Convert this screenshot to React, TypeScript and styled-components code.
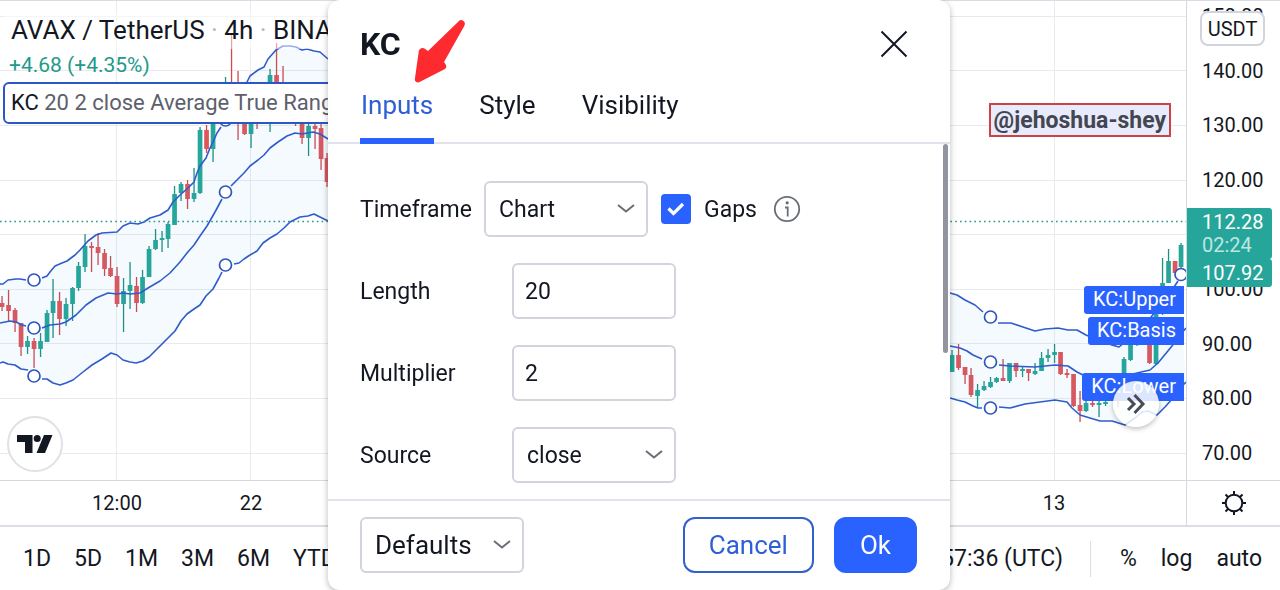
import React from 'react';
import styled, { createGlobalStyle } from 'styled-components';

const GlobalStyle = createGlobalStyle`
  *, *::before, *::after { box-sizing: border-box; }
  body {
    margin: 0;
    background: #fff;
    color: #131722;
    font-family: Roboto, "Liberation Sans", sans-serif;
    overflow: hidden;
  }
  button, input, select { font: inherit; color: inherit; margin: 0; }
`;

/* ---------- chart data ---------- */

type Point = [number, number];
/* x, high, bodyTop, bodyBottom, low, rising */
type Candle = [number, number, number, number, number, 0 | 1];

const leftCandles: Candle[] = [
  [2, 296, 303, 307, 311, 0], [8.5, 290, 305, 311, 321, 0], [15, 308, 310, 323, 332, 0],
  [21, 323, 323, 347, 356, 0], [27.5, 336, 341, 347, 354, 1], [34, 338, 341, 349, 368, 0],
  [40.5, 333, 341, 349, 357, 1], [47, 310, 313, 342, 342, 1], [53, 279, 301, 313, 338, 1],
  [59.5, 292, 301, 319, 335, 0], [66, 298, 304, 319, 326, 1], [72.5, 287, 288, 304, 321, 1],
  [78.5, 262, 266, 288, 291, 1], [85, 234, 246, 267, 272, 1], [91.5, 242, 246, 248, 272, 0],
  [98, 233, 247, 253, 265, 0], [104.5, 249, 253, 269, 276, 0], [110.5, 256, 268, 276, 277, 0],
  [117, 267, 276, 304, 307, 0], [123.5, 278, 291, 304, 332, 1], [130, 262, 285, 291, 309, 1],
  [136.5, 277, 286, 303, 312, 0], [142.5, 270, 277, 303, 304, 1], [149, 246, 249, 277, 277, 1],
  [155.5, 229, 240, 249, 250, 1], [162, 231, 238, 240, 252, 1], [168, 222, 224, 239, 248, 1],
  [174.5, 186, 194, 225, 225, 1], [181, 182, 184, 193, 201, 1], [187.5, 180, 184, 199, 209, 0],
  [194, 168, 193, 199, 202, 1], [200, 127, 130, 193, 194, 1], [206.5, 125, 130, 149, 153, 0],
  [213, 110, 115, 149, 162, 1], [225.5, 77, 90, 115, 120, 1], [231.5, 33, 90, 110, 118, 0],
  [238, 71, 90, 115, 140, 0], [244.5, 90, 100, 134, 135, 0], [251, 95, 100, 134, 148, 1],
  [257, 95, 100, 115, 129, 0], [270, 69, 75, 110, 132, 1], [276.5, 43, 75, 95, 110, 0],
  [283, 66, 90, 110, 118, 0], [295.5, 95, 100, 118, 126, 0], [302, 100, 110, 138, 144, 0],
  [308.5, 110, 126, 138, 156, 1], [315, 118, 126, 129, 149, 0], [321, 122, 128, 159, 170, 0],
  [327, 153, 158, 182, 187, 0],
];

const rightCandles: Candle[] = [
  [952, 350, 355, 372, 372, 1], [958.5, 344, 355, 368, 370, 0], [965, 367, 367, 375, 384, 0],
  [971, 368, 375, 395, 397, 0], [977.5, 384, 390, 396, 407, 1], [984, 381, 386, 390, 391, 1],
  [990.5, 377, 382, 387, 388, 1], [996.5, 377, 378, 382, 383, 1], [1003, 359, 378, 381, 381, 0],
  [1009.5, 363, 363, 381, 383, 1], [1016, 363, 363, 371, 377, 0], [1022.5, 366, 369, 371, 377, 1],
  [1028.5, 369, 369, 373, 381, 0], [1035, 363, 371, 374, 375, 1], [1041.5, 352, 358, 371, 371, 1],
  [1048, 349, 355, 358, 362, 1], [1054.5, 344, 352, 355, 363, 1], [1060.5, 352, 352, 374, 375, 0],
  [1067, 369, 373, 375, 378, 0], [1073.5, 374, 374, 406, 407, 0], [1080, 391, 405, 411, 422, 0],
  [1086, 395, 403, 411, 412, 1], [1092.5, 396, 403, 405, 407, 0], [1099, 396, 403, 405, 417, 1],
  [1105.5, 396, 402, 404, 406, 1], [1118, 385, 390, 398, 407, 0], [1124, 357, 359, 385, 390, 1],
  [1130.5, 335, 344, 360, 361, 1], [1137, 330, 335, 343, 346, 1], [1149.5, 325, 330, 363, 364, 0],
  [1156, 300, 310, 364, 365, 1], [1162.5, 258, 283, 310, 315, 1], [1168.5, 249, 261, 283, 283, 1],
  [1175, 261, 261, 273, 273, 0], [1181, 243, 245, 267, 268, 1],
];

/* Each line is a list of segments; the line is interrupted where a handle sits. */
const leftUpper: Point[][] = [
  [[0, 284], [3, 284], [8, 280], [16, 279], [20, 279], [26, 280]],
  [[42, 278], [47, 276], [50, 272], [55, 266], [62, 263], [67, 261], [75, 255], [80, 250], [88, 241], [96, 235], [102, 233], [117, 232], [123, 226], [130, 223], [138, 224], [144, 222], [150, 218], [160, 215], [168, 210], [173, 202], [180, 195], [188, 188], [194, 182], [197, 173], [200, 166], [206, 158], [210, 148], [213, 142], [217, 133], [221, 127]],
  [[230, 112], [240, 96], [247, 82], [250, 76], [258, 70], [264, 67], [268, 59], [276, 50], [283, 46], [290, 46], [296, 47], [302, 50], [307, 49], [314, 51], [320, 52], [328, 59]],
];
const leftBasis: Point[][] = [
  [[0, 323], [10, 321], [16, 322], [22, 325], [26, 326]],
  [[42, 328], [50, 325], [60, 324], [66, 322], [76, 315], [86, 305], [96, 298], [108, 293], [117, 294], [123, 293], [130, 294], [140, 293], [148, 288], [160, 281], [170, 273], [180, 262], [187, 253], [194, 245], [200, 236], [207, 226], [215, 212], [222, 199]],
  [[231, 186], [236, 181], [244, 173], [250, 166], [258, 160], [264, 155], [270, 148], [278, 142], [287, 136], [295, 133], [302, 134], [313, 132], [320, 134], [328, 139]],
];
const leftLower: Point[][] = [
  [[0, 363], [3, 362], [8, 364], [15, 365], [21, 369], [28, 370]],
  [[42, 379], [47, 379], [53, 383], [60, 385], [66, 383], [73, 380], [83, 372], [92, 365], [102, 359], [111, 353], [117, 355], [123, 360], [130, 362], [136, 363], [143, 361], [149, 357], [156, 350], [162, 344], [168, 338], [175, 331], [181, 321], [187, 314], [194, 309], [200, 305], [206, 296], [213, 289], [219, 278], [222, 272]],
  [[234, 264], [239, 263], [244, 259], [250, 255], [257, 251], [263, 243], [270, 238], [277, 234], [284, 228], [290, 222], [300, 217], [308, 216], [314, 214], [320, 217], [328, 221]],
];
const rightUpper: Point[][] = [
  [[945, 292], [950, 293], [957, 295], [965, 300], [975, 305], [983, 312]],
  [[998, 323], [1011, 323], [1020, 326], [1035, 331], [1045, 329], [1058, 328], [1068, 330], [1077, 330], [1086, 335], [1100, 341], [1112, 345], [1119, 347], [1130, 338], [1145, 325], [1158, 308], [1172, 290], [1178, 281]],
];
const rightBasis: Point[][] = [
  [[945, 345], [950, 346], [960, 348], [967, 351], [973, 355], [982, 359]],
  [[999, 365], [1010, 366], [1035, 367], [1045, 366], [1055, 365], [1068, 366], [1077, 372], [1083, 375], [1105, 378], [1122, 377], [1137, 373], [1150, 370], [1158, 363], [1172, 346], [1180, 335], [1186, 328]],
];
const rightLower: Point[][] = [
  [[945, 396], [950, 398], [957, 400], [965, 402], [973, 406], [978, 408], [982, 408]],
  [[999, 407], [1010, 408], [1025, 404], [1040, 402], [1055, 400], [1067, 402], [1072, 408], [1080, 415], [1090, 418], [1100, 421], [1112, 421], [1125, 425], [1135, 418], [1142, 412], [1148, 411], [1157, 415], [1165, 407], [1173, 398], [1180, 388], [1186, 382]],
];

const handles: Point[] = [
  [34, 280], [34, 328], [34, 376], [225.5, 120], [225.5, 192], [225.5, 265],
  [990.5, 317], [990.5, 362], [990.5, 408], [1181, 274.5],
];

const gridRows = [16, 70, 125, 180, 234, 289, 343, 398, 453];
const gridColumns = [117, 251, 1055];

const toPoints = (points: Point[]) => points.map((p) => p.join(',')).join(' ');

function Band({ upper, basis, lower }: { upper: Point[][]; basis: Point[][]; lower: Point[][] }) {
  return (
    <>
      <polygon points={toPoints([...upper.flat(), ...lower.flat().reverse()])} fill="#2196d8" fillOpacity="0.052" />
      {[...upper, ...basis, ...lower].map((segment, i) => (
        <polyline key={i} points={toPoints(segment)} fill="none" stroke="#2f5ccb" strokeWidth="1.6" strokeLinejoin="round" />
      ))}
    </>
  );
}

function Candles({ items }: { items: Candle[] }) {
  return (
    <>
      {items.map(([x, high, top, bottom, low, rising]) => (
        <g key={x} fill={rising ? '#26a69a' : '#e0555a'}>
          <rect x={x - 0.6} y={high} width="1.3" height={low - high} fill={rising ? '#1f8f84' : '#cf4b50'} />
          <rect x={x - 2.3} y={top} width="4.7" height={bottom - top} />
        </g>
      ))}
    </>
  );
}

/* ---------- page ---------- */

const Page = styled.main`
  display: grid;
  grid-template: minmax(0, 1fr) 45px 65px / minmax(0, 1fr) 94px;
  height: 100vh;
  border-top: 1px solid #d9dbe5;
`;

const ChartPane = styled.section`
  position: relative;
  overflow: hidden;
`;

const Plot = styled.svg`
  position: absolute;
  inset: 0;
  width: 100%;
  height: 100%;
`;

const Legend = styled.div`
  position: relative;
  display: flex;
  flex-direction: column;
  align-items: flex-start;
  padding: 10px 0 0 3px;
  white-space: nowrap;
`;

const SymbolTitle = styled.h1`
  margin: 0;
  padding-left: 8px;
  background: rgba(255, 255, 255, 0.5);
  font-size: 26px;
  line-height: 38px;
  font-weight: 400;
`;

const Dot = styled.span`
  color: #b2b5be;
`;

const Change = styled.div`
  padding-left: 6px;
  margin-bottom: 1px;
  font-size: 21px;
  line-height: 32px;
  color: #22998a;
`;

const StudyLegend = styled.div`
  width: 420px;
  height: 42px;
  padding-left: 6px;
  border: 2px solid #2a56c6;
  border-radius: 6px;
  background: #fff;
  font-size: 22px;
  line-height: 38px;
  color: #5d606b;
`;

const StudyName = styled.span`
  color: #131722;
`;

const Watermark = styled.div`
  position: absolute;
  top: 102px;
  right: 15px;
  padding: 1px 3px 0;
  border: 2px solid #cc4346;
  background: #e8ebfb;
  color: #434651;
  font-size: 23px;
  line-height: 29px;
  font-weight: 700;
`;

const LineLabel = styled.div<{ $top: number }>`
  position: absolute;
  top: ${(p) => p.$top}px;
  right: 2px;
  padding: 0 8px 2px 9px;
  border-radius: 3px 0 0 3px;
  background: #2962ff;
  color: #fff;
  font-size: 20px;
  line-height: 26px;
`;

const RoundButton = styled.button`
  position: absolute;
  right: 27px;
  bottom: 53px;
  display: grid;
  place-items: center;
  width: 46px;
  height: 46px;
  padding: 0;
  border: 0;
  border-radius: 50%;
  background: rgba(255, 255, 255, 0.84);
  box-shadow: 0 2px 5px rgba(0, 0, 0, 0.25);
`;

const LogoLink = styled.a`
  position: absolute;
  left: 7px;
  bottom: 8px;
  display: grid;
  place-items: center;
  width: 56px;
  height: 56px;
  border: 2px solid #e0e1e5;
  border-radius: 50%;
  background: #fff;
`;

const PriceAxis = styled.aside`
  position: relative;
  overflow: hidden;
  border-left: 1px solid #d6d8e0;
`;

const PriceList = styled.ol`
  display: grid;
  grid-auto-rows: 1fr;
  align-items: center;
  height: calc(100% + 12px);
  margin: -12px 0 0;
  padding: 0 0 0 15px;
  list-style: none;
  font-size: 20px;
  line-height: 24px;
`;

const CurrencyButton = styled.button`
  position: absolute;
  top: 10px;
  left: 13px;
  width: 65px;
  height: 35px;
  padding: 0;
  border: 2px solid #d1d4dc;
  border-radius: 8px;
  background: #fff;
  font-size: 20px;
`;

const PriceTags = styled.div`
  position: absolute;
  top: 207px;
  left: 0;
  width: 85px;
`;

const PriceTag = styled.div`
  padding: 3px 0 2px 15px;
  border-radius: 0 3px 3px 0;
  background: #26a69a;
  color: #fff;
  font-size: 20px;
  line-height: 23px;
`;

const Countdown = styled.div`
  color: #bfe5e1;
`;

const TimeAxis = styled.div`
  display: grid;
  grid-template-columns: 234px 34px 1fr 264px;
  align-items: center;
  justify-items: center;
  border-top: 1px solid #d6d8e0;
  font-size: 20px;
`;

const LastTime = styled.span`
  grid-column: 4;
`;

const AxisCorner = styled.div`
  display: grid;
  place-items: center;
  border-top: 1px solid #d6d8e0;
  border-left: 1px solid #d6d8e0;
`;

const IconButton = styled.button`
  display: grid;
  place-items: center;
  padding: 0;
  border: 0;
  background: none;
`;

const BottomBar = styled.footer`
  grid-column: 1 / -1;
  display: flex;
  justify-content: space-between;
  align-items: center;
  padding: 0 18px 0 23px;
  border-top: 2px solid #dcdde6;
  white-space: nowrap;
`;

const BarGroup = styled.div<{ $gap: number }>`
  display: flex;
  align-items: center;
  gap: ${(p) => p.$gap}px;
`;

const BarButton = styled.button`
  padding: 0;
  border: 0;
  background: none;
  font-size: 23px;
  line-height: 32px;
`;

const Divider = styled.span`
  width: 1px;
  height: 36px;
  margin: 0 5px 0 3px;
  background: #dcdee6;
`;

/* ---------- dialog ---------- */

const Overlay = styled.div`
  position: fixed;
  inset: 0;
  display: flex;
  justify-content: center;
  padding-right: 2px;
`;

const Dialog = styled.section`
  position: relative;
  display: flex;
  flex-direction: column;
  width: 622px;
  max-width: 100%;
  border-radius: 12px;
  background: #fff;
  box-shadow: 0 2px 6px rgba(0, 0, 0, 0.28);
`;

const DialogHeader = styled.header`
  padding: 22px 32px 0;
  border-bottom: 2px solid #e0e3eb;
`;

const TitleRow = styled.div`
  display: flex;
  align-items: center;
  justify-content: space-between;
  height: 43px;
  padding-right: 10px;
`;

const DialogTitle = styled.h2`
  margin: 0;
  font-size: 32px;
  line-height: 42px;
  font-weight: 700;
`;

const TabList = styled.div`
  display: flex;
  gap: 44px;
  margin: 15px 0 -2px;
`;

const Tab = styled.button<{ $active?: boolean }>`
  height: 64px;
  padding: 0 1px 8px;
  border: 0;
  border-bottom: 6px solid ${(p) => (p.$active ? '#2962ff' : 'transparent')};
  background: none;
  color: ${(p) => (p.$active ? '#2f5fd6' : '#131722')};
  font-size: 26px;
`;

const Pointer = styled.svg`
  position: absolute;
  top: 18px;
  left: 85px;
`;

const DialogBody = styled.div`
  position: relative;
  flex: 1;
  display: flex;
  flex-direction: column;
  gap: 26px;
  min-height: 0;
  padding: 37px 32px 0;
  overflow: hidden;
  font-size: 23px;
`;

const ScrollThumb = styled.div`
  position: absolute;
  top: 0;
  right: 2px;
  width: 5px;
  height: 59%;
  border-radius: 3px;
  background: #9294a0;
`;

const FieldRow = styled.div`
  display: flex;
  align-items: center;
  flex-shrink: 0;
`;

const FieldLabel = styled.label<{ $compact?: boolean }>`
  width: ${(p) => (p.$compact ? 124 : 152)}px;
`;

const TextBox = styled.input`
  width: 164px;
  height: 56px;
  padding: 0 11px;
  border: 2px solid #d1d4dc;
  border-radius: 6px;
  background: #fff;
  outline: 0;
`;

const SelectFrame = styled.div`
  display: grid;
  align-items: center;
  width: 164px;
`;

const SelectBox = styled.select`
  grid-area: 1 / 1;
  width: 100%;
  height: 56px;
  padding: 0 36px 0 13px;
  border: 2px solid #d1d4dc;
  border-radius: 6px;
  background: #fff;
  appearance: none;
  outline: 0;
`;

const Chevron = styled.svg`
  grid-area: 1 / 1;
  justify-self: end;
  margin-right: 12px;
  pointer-events: none;
`;

const CheckFrame = styled.span`
  display: grid;
  place-items: center;
  margin: 0 13px;
`;

const CheckBox = styled.input`
  grid-area: 1 / 1;
  width: 30px;
  height: 30px;
  margin: 0;
  border-radius: 4px;
  background: #2962ff;
  appearance: none;
`;

const CheckMark = styled.svg`
  grid-area: 1 / 1;
  pointer-events: none;
`;

const InfoIcon = styled.svg`
  margin-left: 16px;
`;

const DialogFooter = styled.footer`
  display: flex;
  align-items: center;
  gap: 20px;
  padding: 16px 33px 17px 32px;
  border-top: 2px solid #e0e3eb;
  font-size: 26px;
`;

const Spacer = styled.span`
  flex: 1;
`;

const ActionButton = styled.button<{ $primary?: boolean }>`
  height: 56px;
  padding: 0 24px;
  border: 2px solid ${(p) => (p.$primary ? '#2962ff' : '#3260cf')};
  border-radius: 12px;
  background: ${(p) => (p.$primary ? '#2962ff' : '#fff')};
  color: ${(p) => (p.$primary ? '#fff' : '#2f5fd6')};
`;

function Select({ id, value, label }: { id: string; value: string; label?: string }) {
  return (
    <SelectFrame>
      <SelectBox id={id} aria-label={label} defaultValue={value}>
        <option>{value}</option>
      </SelectBox>
      <Chevron width="20" height="12" viewBox="0 0 20 12" fill="none" stroke="#6a6d78" strokeWidth="2">
        <path d="M2 2 L10 8.5 L18 2" />
      </Chevron>
    </SelectFrame>
  );
}

function Chart() {
  return (
    <Plot viewBox="0 1 1186 479" preserveAspectRatio="none" aria-hidden="true">
      <g stroke="#e9eaef" strokeWidth="1">
        {gridRows.map((y) => <line key={y} x1="0" x2="1186" y1={y + 0.5} y2={y + 0.5} />)}
        {gridColumns.map((x) => <line key={x} x1={x - 0.5} x2={x - 0.5} y1="0" y2="480" />)}
      </g>
      <Candles items={leftCandles} />
      <Candles items={rightCandles} />
      <Band upper={leftUpper} basis={leftBasis} lower={leftLower} />
      <Band upper={rightUpper} basis={rightBasis} lower={rightLower} />
      <line x1="0" x2="1186" y1="221.5" y2="221.5" stroke="#26988c" strokeWidth="1.6" strokeDasharray="1.6 3.2" />
      {handles.map(([x, y]) => (
        <circle key={`${x}-${y}`} cx={x} cy={y} r="6" fill="#fff" stroke="#2f55bd" strokeWidth="1.7" />
      ))}
    </Plot>
  );
}

/* The empty slot is the level that the current-price tags cover. */
const prices = ['150.00', '140.00', '130.00', '120.00', '', '100.00', '90.00', '80.00', '70.00'];
const ranges = ['1D', '5D', '1M', '3M', '6M', 'YTD'];

export default function App() {
  return (
    <>
      <GlobalStyle />
      <Page>
        <ChartPane>
          <Chart />
          <Legend>
            <SymbolTitle>
              AVAX / TetherUS <Dot>·</Dot> 4h <Dot>·</Dot> BINANCE
            </SymbolTitle>
            <Change>+4.68 (+4.35%)</Change>
            <StudyLegend>
              <StudyName>KC</StudyName> 20 2 close Average True Range
            </StudyLegend>
          </Legend>
          <Watermark>@jehoshua-shey</Watermark>
          <LineLabel $top={285}>KC:Upper</LineLabel>
          <LineLabel $top={316}>KC:Basis</LineLabel>
          <LineLabel $top={372}>KC:Lower</LineLabel>
          <RoundButton type="button" aria-label="Scroll to latest bar">
            <svg width="20" height="22" viewBox="0 0 20 22" fill="none" stroke="#4a4c55" strokeWidth="3">
              <path d="M2 5 L8 11 L2 17" />
              <path d="M8.5 2 L17 11 L8.5 20" />
            </svg>
          </RoundButton>
          <LogoLink href="#" aria-label="TradingView">
            <svg width="36" height="18" viewBox="0 0 36 18" fill="#131722">
              <path d="M0 0 H15.5 V18 H8 V7 H0 Z" />
              <circle cx="20.2" cy="3.6" r="3.5" />
              <path d="M27 0 H35.5 L28 18 H19.5 Z" />
            </svg>
          </LogoLink>
        </ChartPane>

        <PriceAxis>
          <PriceList>
            {prices.map((price, i) => <li key={i}>{price}</li>)}
          </PriceList>
          <CurrencyButton type="button">USDT</CurrencyButton>
          <PriceTags>
            <PriceTag>
              112.28
              <Countdown>02:24</Countdown>
            </PriceTag>
            <PriceTag>107.92</PriceTag>
          </PriceTags>
        </PriceAxis>

        <TimeAxis>
          <span>12:00</span>
          <span>22</span>
          <LastTime>13</LastTime>
        </TimeAxis>
        <AxisCorner>
          <IconButton type="button" aria-label="Chart settings">
            <svg width="26" height="26" viewBox="0 0 26 26" fill="none" stroke="#131722" strokeWidth="2">
              <circle cx="13" cy="13" r="8.3" />
              <path d="M13 1V5M13 21V25M1 13H5M21 13H25M4.5 4.5L7.3 7.3M18.7 18.7L21.5 21.5M4.5 21.5L7.3 18.7M18.7 7.3L21.5 4.5" />
            </svg>
          </IconButton>
        </AxisCorner>

        <BottomBar>
          <BarGroup $gap={23}>
            {ranges.map((range) => <BarButton key={range} type="button">{range}</BarButton>)}
          </BarGroup>
          <BarGroup $gap={24}>
            <BarButton type="button">13:57:36 (UTC)</BarButton>
            <Divider />
            <BarButton type="button">%</BarButton>
            <BarButton type="button">log</BarButton>
            <BarButton type="button">auto</BarButton>
          </BarGroup>
        </BottomBar>
      </Page>

      <Overlay>
        <Dialog role="dialog" aria-labelledby="dialog-title">
          <DialogHeader>
            <TitleRow>
              <DialogTitle id="dialog-title">KC</DialogTitle>
              <IconButton type="button" aria-label="Close">
                <svg width="28" height="28" viewBox="0 0 28 28" fill="none" stroke="#131722" strokeWidth="2">
                  <path d="M1.5 1.5 L26.5 26.5 M26.5 1.5 L1.5 26.5" />
                </svg>
              </IconButton>
            </TitleRow>
            <TabList role="tablist">
              <Tab type="button" role="tab" aria-selected="true" $active>Inputs</Tab>
              <Tab type="button" role="tab" aria-selected="false">Style</Tab>
              <Tab type="button" role="tab" aria-selected="false">Visibility</Tab>
            </TabList>
          </DialogHeader>

          <DialogBody>
            <FieldRow>
              <FieldLabel htmlFor="timeframe" $compact>Timeframe</FieldLabel>
              <Select id="timeframe" value="Chart" />
              <CheckFrame>
                <CheckBox id="gaps" type="checkbox" defaultChecked />
                <CheckMark width="18" height="14" viewBox="0 0 18 14" fill="none" stroke="#fff" strokeWidth="3.2">
                  <path d="M1.5 6.5 L6.5 11.5 L16 2" />
                </CheckMark>
              </CheckFrame>
              <label htmlFor="gaps">Gaps</label>
              <InfoIcon width="28" height="28" viewBox="0 0 28 28" fill="none" stroke="#6a6d78" strokeWidth="1.8">
                <circle cx="14" cy="14" r="12.2" />
                <path d="M12 12.5 H14.7 V21.5" />
                <circle cx="14.2" cy="7.8" r="1.6" fill="#6a6d78" stroke="none" />
              </InfoIcon>
            </FieldRow>
            <FieldRow>
              <FieldLabel htmlFor="length">Length</FieldLabel>
              <TextBox id="length" type="text" defaultValue="20" />
            </FieldRow>
            <FieldRow>
              <FieldLabel htmlFor="multiplier">Multiplier</FieldLabel>
              <TextBox id="multiplier" type="text" defaultValue="2" />
            </FieldRow>
            <FieldRow>
              <FieldLabel htmlFor="source">Source</FieldLabel>
              <Select id="source" value="close" />
            </FieldRow>
            <ScrollThumb />
          </DialogBody>

          <DialogFooter>
            <Select id="defaults" value="Defaults" label="Defaults" />
            <Spacer />
            <ActionButton type="button">Cancel</ActionButton>
            <ActionButton type="button" $primary>Ok</ActionButton>
          </DialogFooter>

          <Pointer width="54" height="68" viewBox="0 0 54 68" fill="#fd2b2f" aria-hidden="true">
            <path d="M45.5 3.5 Q48 1 50.5 3 Q53 5 51 8.5 L31 44 L33 47 Q34 50 31 51.5 L7.5 63.5 Q4 65.5 2.2 63 Q1.5 61.5 2 60 L5.8 33 Q7 29.5 11 30.2 L15 33 Z" />
          </Pointer>
        </Dialog>
      </Overlay>
    </>
  );
}
